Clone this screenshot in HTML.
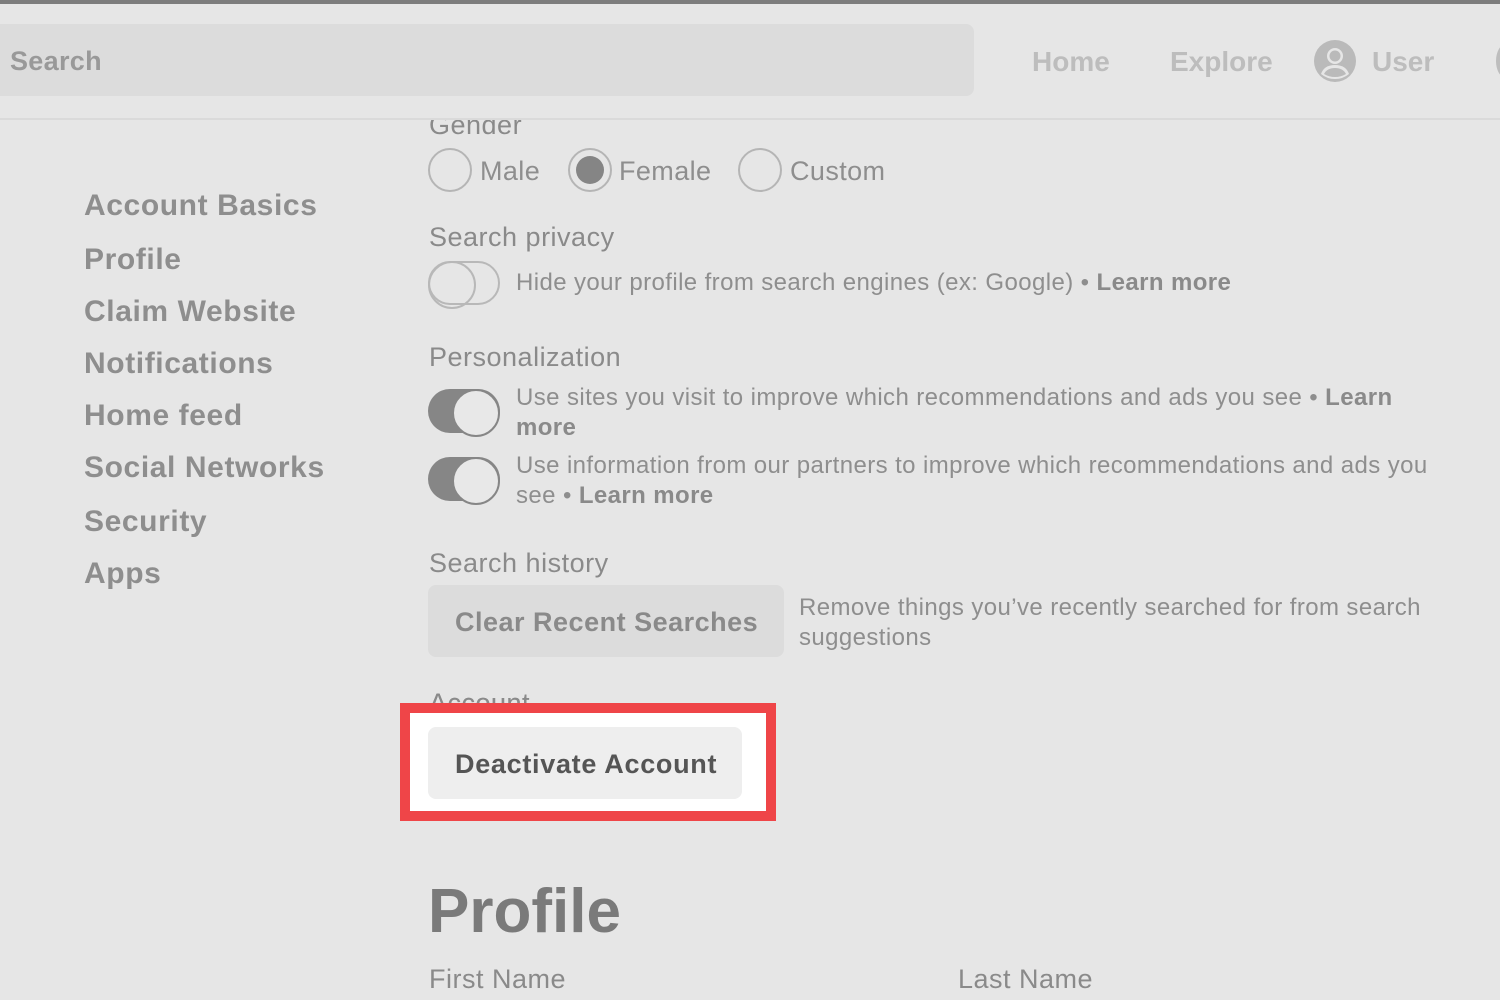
<!DOCTYPE html>
<html><head><meta charset="utf-8"><style>
*{margin:0;padding:0;box-sizing:border-box}
body{width:1500px;height:1000px;overflow:hidden;background:#e6e6e6;font-family:"Liberation Sans",sans-serif;position:relative;color:#8a8a8a}
.a{position:absolute;white-space:nowrap}
.nav{font-size:30px;font-weight:bold;color:#8e8e8e;left:84px;letter-spacing:0.6px}
.lbl{font-size:27px;color:#8a8a8a;left:429px;letter-spacing:0.5px}
.t{font-size:24px;color:#8e8e8e;letter-spacing:0.4px}
.t b{color:#8a8a8a}
.radio{width:44px;height:44px;border-radius:50%;border:2px solid #b5b5b5;position:absolute}
.tog{position:absolute;width:72px;height:44px;border-radius:22px}
.tog.on{background:#868686}
.tog.on::after{content:"";position:absolute;right:0;top:0;width:44px;height:44px;border-radius:50%;background:#e8e8e8;border:2px solid #868686}
.tog.off{border:2px solid #b8b8b8}
.tog.off::after{content:"";position:absolute;left:-2px;top:-2px;width:44px;height:44px;border-radius:50%;border:2px solid #b8b8b8}
</style></head><body>
<div class="a" style="left:0;top:0;width:1500px;height:4px;background:#7d7d7d"></div>
<div class="a" style="left:0;top:24px;width:974px;height:72px;background:#dcdcdc;border-radius:0 8px 8px 0"></div>
<div class="a" style="left:10px;top:46px;font-size:27px;font-weight:bold;color:#999;letter-spacing:0.3px">Search</div>
<div class="a" style="left:1032px;top:46px;font-size:28px;font-weight:bold;color:#bdbdbd">Home</div>
<div class="a" style="left:1170px;top:46px;font-size:28px;font-weight:bold;color:#bdbdbd">Explore</div>
<svg class="a" style="left:1314px;top:40px" width="42" height="42" viewBox="0 0 42 42"><circle cx="21" cy="21" r="21" fill="#bababa"/><circle cx="21" cy="16" r="8" fill="#e6e6e6"/><circle cx="21" cy="16" r="5.5" fill="#bababa"/><path d="M7 34 Q10 25 21 25 Q32 25 35 34 Q29 39 21 39 Q13 39 7 34Z" fill="#e6e6e6"/><path d="M10 34 Q13 28 21 28 Q29 28 32 34 Q27 37 21 37 Q15 37 10 34Z" fill="#bababa"/></svg>
<div class="a" style="left:1372px;top:46px;font-size:28px;font-weight:bold;color:#bdbdbd">User</div>
<div class="a" style="left:1496px;top:44px;width:20px;height:34px;border-radius:50%;border:4px solid #bdbdbd"></div>
<div class="a" style="left:0;top:118px;width:1500px;height:2px;background:#dadada"></div>

<div class="a lbl" style="top:110px;height:30px;overflow:hidden;clip-path:inset(10px 0 0 0)">Gender</div>
<div class="radio" style="left:428px;top:148px"></div><div class="a t" style="left:480px;top:156px;font-size:27px">Male</div>
<div class="radio" style="left:568px;top:148px"></div><div class="a" style="left:576px;top:156px;width:28px;height:28px;border-radius:50%;background:#858585"></div>
<div class="a t" style="left:619px;top:156px;font-size:27px">Female</div>
<div class="radio" style="left:738px;top:148px"></div><div class="a t" style="left:790px;top:156px;font-size:27px">Custom</div>

<div class="a nav" style="top:189px">Account Basics</div>
<div class="a nav" style="top:243px">Profile</div>
<div class="a nav" style="top:295px">Claim Website</div>
<div class="a nav" style="top:347px">Notifications</div>
<div class="a nav" style="top:399px">Home feed</div>
<div class="a nav" style="top:451px">Social Networks</div>
<div class="a nav" style="top:505px">Security</div>
<div class="a nav" style="top:557px">Apps</div>

<div class="a lbl" style="top:222px">Search privacy</div>
<div class="tog off" style="left:428px;top:261px"></div>
<div class="a t" style="left:516px;top:269px">Hide your profile from search engines (ex: Google) • <b>Learn more</b></div>

<div class="a lbl" style="top:342px">Personalization</div>
<div class="tog on" style="left:428px;top:389px"></div>
<div class="a t" style="left:516px;top:383px;line-height:30px">Use sites you visit to improve which recommendations and ads you see • <b>Learn</b><br><b>more</b></div>
<div class="tog on" style="left:428px;top:457px"></div>
<div class="a t" style="left:516px;top:451px;line-height:30px">Use information from our partners to improve which recommendations and ads you<br>see • <b>Learn more</b></div>

<div class="a lbl" style="top:548px">Search history</div>
<div class="a" style="left:428px;top:585px;width:356px;height:72px;background:#dcdcdc;border-radius:8px"></div>
<div class="a" style="left:455px;top:607px;font-size:27px;font-weight:bold;color:#8a8a8a;letter-spacing:0.5px">Clear Recent Searches</div>
<div class="a t" style="left:799px;top:593px;line-height:30px">Remove things you’ve recently searched for from search<br>suggestions</div>

<div class="a lbl" style="top:688px">Account</div>
<div class="a" style="left:400px;top:703px;width:376px;height:118px;border:10px solid #ef4548;background:#fff"></div>
<div class="a" style="left:428px;top:727px;width:314px;height:72px;background:#eeeeee;border-radius:8px"></div>
<div class="a" style="left:455px;top:749px;font-size:27px;font-weight:bold;color:#555;letter-spacing:0.7px">Deactivate Account</div>
<div class="a lbl" style="top:688px;height:15px;overflow:hidden">Account</div>

<div class="a" style="left:428px;top:876px;font-size:62px;font-weight:bold;color:#7a7a7a">Profile</div>
<div class="a lbl" style="top:964px">First Name</div>
<div class="a lbl" style="left:958px;top:964px">Last Name</div>
</body></html>
